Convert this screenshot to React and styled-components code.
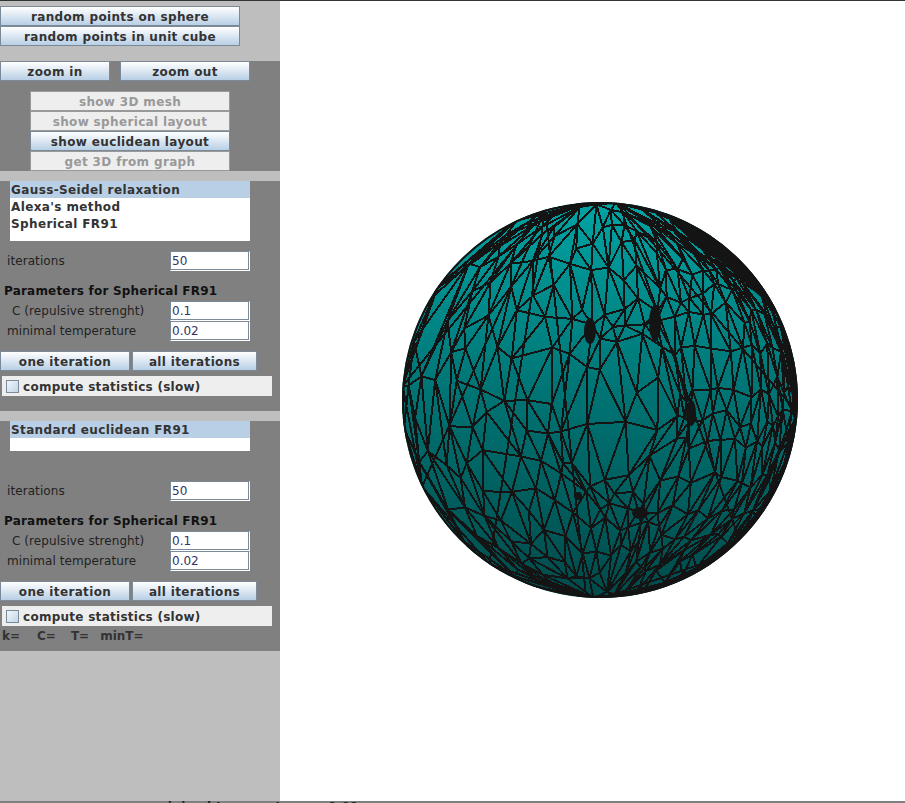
import React, { useMemo } from "react";
import styled, { createGlobalStyle } from "styled-components";

const GlobalStyle = createGlobalStyle`
  html, body {
    margin: 0;
    padding: 0;
    height: 803px;
    overflow: hidden;
    background: #fff;
  }
`;

const FONT = `"DejaVu Sans", sans-serif`;
const BLUE_GRADIENT = "linear-gradient(#ffffff, #b8cfe5)";

const Page = styled.div`
  width: 905px;
  height: 803px;
  display: flex;
  flex-direction: column;
  font-family: ${FONT};
  overflow: hidden;
`;

const TopLine = styled.div`
  height: 1px;
  flex: none;
  background: #333;
`;

const Main = styled.div`
  height: 800px;
  flex: none;
  display: flex;
`;

const Sidebar = styled.div`
  width: 280px;
  flex: none;
  display: flex;
  flex-direction: column;
  background: #bebebe;
`;

const Panel = styled.div`
  height: ${(props) => props.$height}px;
  flex: none;
  box-sizing: border-box;
  padding-top: ${(props) => props.$top || 0}px;
  background: ${(props) => (props.$dark ? "#808080" : "#bebebe")};
  display: flex;
  flex-direction: column;
`;

const Spacer = styled.div`
  height: ${(props) => props.$height}px;
  flex: none;
`;

const Button = styled.button`
  width: ${(props) => props.$width}px;
  height: 20px;
  flex: none;
  box-sizing: border-box;
  margin: 0;
  padding: 2px 0 0;
  border: 1px solid ${(props) => (props.disabled ? "#999" : "#7a8a99")};
  background: ${(props) => (props.disabled ? "#eeeeee" : BLUE_GRADIENT)};
  color: ${(props) => (props.disabled ? "#999" : "#333")};
  font-family: ${FONT};
  font-size: 12px;
  font-weight: bold;
  letter-spacing: 0.35px;
  white-space: nowrap;
`;

const ZoomRow = styled.div`
  display: flex;
  gap: 10px;
  margin-bottom: 10px;
`;

const ViewButtons = styled.div`
  display: flex;
  flex-direction: column;
  padding-left: 30px;
`;

const MethodList = styled.ul`
  width: 240px;
  height: ${(props) => props.$height}px;
  flex: none;
  margin: 0 0 0 10px;
  padding: 0;
  list-style: none;
  background: #fff;
`;

const MethodItem = styled.li`
  height: 17px;
  padding-left: 1px;
  line-height: 18px;
  font-size: 12px;
  font-weight: bold;
  letter-spacing: 0.38px;
  color: #333;
  background: ${(props) => (props.$selected ? "#b8cfe5" : "#fff")};
`;

const FieldRow = styled.div`
  height: 20px;
  flex: none;
  display: flex;
  align-items: center;
  justify-content: space-between;
  width: 250px;
`;

const FieldLabel = styled.span`
  padding-left: ${(props) => props.$indent}px;
  font-size: 12px;
  letter-spacing: 0.08px;
  color: #222;
  white-space: nowrap;
`;

const TextField = styled.input`
  width: 80px;
  height: 20px;
  flex: none;
  box-sizing: border-box;
  padding: 0 0 0 1px;
  border-style: solid;
  border-width: 1px;
  border-color: #7a8a99 #fff #fff #7a8a99;
  box-shadow: inset -1px -1px 0 #7a8a99;
  background: #fff;
  color: #333366;
  font-family: ${FONT};
  font-size: 12px;
  outline: none;
`;

const Heading = styled.div`
  height: 20px;
  flex: none;
  padding-left: 4px;
  line-height: 20px;
  font-size: 12px;
  font-weight: bold;
  letter-spacing: 0.2px;
  color: #111;
`;

const IterationButtons = styled.div`
  display: flex;
  gap: 2px;
  margin-top: 10px;
`;

const CheckRow = styled.label`
  width: 270px;
  height: 20px;
  flex: none;
  margin: 5px 0 0 2px;
  display: flex;
  align-items: center;
  gap: 4px;
  padding-left: 4px;
  box-sizing: border-box;
  background: #eeeeee;
  font-size: 12px;
  font-weight: bold;
  letter-spacing: 0.27px;
  color: #333;
`;

const CheckText = styled.span`
  padding-top: 2px;
`;

const CheckBox = styled.span`
  width: 13px;
  height: 13px;
  flex: none;
  box-sizing: border-box;
  border: 1px solid #7a8a99;
  background: linear-gradient(135deg, #f2f6fa, #c3d6e8);
`;

const StatusRow = styled.div`
  display: flex;
  height: 16px;
  margin-top: 2px;
  padding-left: 2px;
  line-height: 16px;
  font-size: 12px;
  font-weight: bold;
  color: #333;
`;

const StatusItem = styled.span`
  margin-right: ${(props) => props.$after || 0}px;
`;

const Canvas = styled.div`
  flex: 1;
  background: #fff;
`;

const SphereSvg = styled.svg`
  display: block;
`;

const BottomStrip = styled.div`
  height: 2px;
  flex: none;
  padding-left: 155px;
  overflow: hidden;
  background: #808080;
  color: #222;
  font-size: 12px;
  font-weight: bold;
  letter-spacing: 0.35px;
  line-height: 12px;
  white-space: pre;
`;

// sphere centre in canvas coordinates
const CX = 320;
const CY = 399;
const R = 198;

// spots where the relaxation bunches the vertices up
const CLUSTERS = [
  [310, 329, 0.72, 20],
  [375, 320, 0.75, 24],
  [411, 412, 0.72, 24],
  [270, 440, 0.55, 20],
  [298, 492, 0.55, 20],
  [360, 512, 0.75, 26],
  [445, 270, 0.45, 26],
];

// dark knots where the lines run together
const KNOTS = [
  [310, 330, 6, 13],
  [375, 322, 6, 18],
  [411, 412, 5, 13],
  [360, 512, 8, 6],
  [298, 495, 4, 4],
];

function rng(seed) {
  let a = seed;
  return () => {
    a = (a + 0x6d2b79f5) | 0;
    let t = Math.imul(a ^ (a >>> 15), 1 | a);
    t = (t + Math.imul(t ^ (t >>> 7), 61 | t)) ^ t;
    return ((t ^ (t >>> 14)) >>> 0) / 4294967296;
  };
}

function delaunay(pts) {
  const all = pts.concat([[-9000, -9000], [9000, -9000], [0, 11000]]);
  const n = pts.length;
  const circum = (a, b, c) => {
    const [ax, ay] = all[a];
    const [bx, by] = all[b];
    const [cx, cy] = all[c];
    const d = 2 * (ax * (by - cy) + bx * (cy - ay) + cx * (ay - by));
    const aa = ax * ax + ay * ay;
    const bb = bx * bx + by * by;
    const cc = cx * cx + cy * cy;
    const x = (aa * (by - cy) + bb * (cy - ay) + cc * (ay - by)) / d;
    const y = (aa * (cx - bx) + bb * (ax - cx) + cc * (bx - ax)) / d;
    return { a, b, c, x, y, r: (ax - x) ** 2 + (ay - y) ** 2 };
  };
  let tris = [circum(n, n + 1, n + 2)];
  pts.forEach((p, i) => {
    const edges = new Map();
    const keep = [];
    tris.forEach((t) => {
      if ((p[0] - t.x) ** 2 + (p[1] - t.y) ** 2 < t.r) {
        [[t.a, t.b], [t.b, t.c], [t.c, t.a]].forEach(([u, v]) => {
          const k = u < v ? `${u}_${v}` : `${v}_${u}`;
          edges.set(k, edges.has(k) ? null : [u, v]);
        });
      } else keep.push(t);
    });
    edges.forEach((e) => {
      if (e) keep.push(circum(e[0], e[1], i));
    });
    tris = keep;
  });
  const out = new Map();
  tris.forEach((t) => {
    [[t.a, t.b], [t.b, t.c], [t.c, t.a]].forEach(([u, v]) => {
      if (u < n && v < n) out.set(u < v ? `${u}_${v}` : `${v}_${u}`, [u, v]);
    });
  });
  return [...out.values()];
}

function buildMesh() {
  const rand = rng(17);
  const param = [];
  const LON_STEP = 5.5;
  const LAT_STEP = 10;
  let row = 0;
  for (let lat = -86; lat <= 86; lat += LAT_STEP) {
    const shift = row % 2 ? LON_STEP / 2 : 0;
    const keepChance = Math.cos((lat * Math.PI) / 180) * 1.5;
    for (let lon = -90 + shift; lon <= 90; lon += LON_STEP) {
      if (rand() > keepChance && lon < 25) continue;
      const t = lon / 90;
      // more columns on the right of the ball than on the left
      const bent = 90 * (t + 0.42 * (1 - t * t));
      // the left limb stays open, only a few long meridians there
      if (bent < -60 && rand() < 0.55) continue;
      param.push([
        bent + (rand() - 0.5) * LON_STEP * 0.7,
        lat + (rand() - 0.5) * LAT_STEP * 0.7,
      ]);
    }
    if (row % 3 === 0) param.push([-90, lat]);
    if (row % 2 === 0) param.push([90, lat]);
    row += 1;
  }
  const edges = delaunay(param.map(([lon, lat]) => [lon * 2.3, lat]));
  const screen = param.map(([lon, lat]) => {
    const a = (lon * Math.PI) / 180;
    const b = (lat * Math.PI) / 180;
    const x = CX + R * Math.sin(a) * Math.cos(b);
    const y = CY - R * Math.sin(b);
    const r = Math.hypot(x - CX, y - CY);
    if (r > R * 0.97) return [x, y];
    let dx = 0;
    let dy = 0;
    CLUSTERS.forEach(([cx, cy, pull, size]) => {
      const d2 = (x - cx) ** 2 + (y - cy) ** 2;
      const w = pull * Math.exp(-d2 / (2 * (size * 1.6) ** 2));
      dx += (cx - x) * w;
      dy += (cy - y) * w;
    });
    return [x + dx, y + dy];
  });
  return edges
    .map(([u, v]) => `M${screen[u][0].toFixed(1)} ${screen[u][1].toFixed(1)}L${screen[v][0].toFixed(1)} ${screen[v][1].toFixed(1)}`)
    .join("");
}

function Sphere() {
  const mesh = useMemo(buildMesh, []);
  return (
    <SphereSvg width="625" height="800" viewBox="0 0 625 800">
      <defs>
        <linearGradient id="teal" x1="0" y1="0" x2="0" y2="1">
          <stop offset="0" stopColor="#00a3a3" />
          <stop offset="0.5" stopColor="#007272" />
          <stop offset="1" stopColor="#004a4a" />
        </linearGradient>
        <clipPath id="disc">
          <circle cx={CX} cy={CY} r={R} />
        </clipPath>
      </defs>
      <circle cx={CX} cy={CY} r={R} fill="url(#teal)" />
      <g clipPath="url(#disc)">
        <path d={mesh} fill="none" stroke="#141414" strokeWidth="2" shapeRendering="crispEdges" />
        {KNOTS.map(([x, y, rx, ry]) => (
          <ellipse key={`${x}-${y}`} cx={x} cy={y} rx={rx} ry={ry} fill="#141414" />
        ))}
        <path d="M385 212 A198 198 0 0 1 497 310Z" fill="#141414" />
      </g>
      <circle cx={CX} cy={CY} r={R - 1} fill="none" stroke="#141414" strokeWidth="2" />
    </SphereSvg>
  );
}

function Parameters({ title }) {
  return (
    <>
      <FieldRow>
        <FieldLabel $indent={7}>iterations</FieldLabel>
        <TextField defaultValue="50" />
      </FieldRow>
      <Spacer $height={10} />
      <Heading>{title}</Heading>
      <FieldRow>
        <FieldLabel $indent={12}>C (repulsive strenght)</FieldLabel>
        <TextField defaultValue="0.1" />
      </FieldRow>
      <FieldRow>
        <FieldLabel $indent={7}>minimal temperature</FieldLabel>
        <TextField defaultValue="0.02" />
      </FieldRow>
      <IterationButtons>
        <Button $width={130}>one iteration</Button>
        <Button $width={125}>all iterations</Button>
      </IterationButtons>
      <CheckRow>
        <CheckBox />
        <CheckText>compute statistics (slow)</CheckText>
      </CheckRow>
    </>
  );
}

export default function App() {
  return (
    <Page>
      <GlobalStyle />
      <TopLine />
      <Main>
        <Sidebar>
          <Panel $height={60} $top={5}>
            <Button $width={240}>random points on sphere</Button>
            <Button $width={240}>random points in unit cube</Button>
          </Panel>
          <Panel $dark $height={110}>
            <ZoomRow>
              <Button $width={110}>zoom in</Button>
              <Button $width={130}>zoom out</Button>
            </ZoomRow>
            <ViewButtons>
              <Button $width={200} disabled>show 3D mesh</Button>
              <Button $width={200} disabled>show spherical layout</Button>
              <Button $width={200}>show euclidean layout</Button>
              <Button $width={200} disabled>get 3D from graph</Button>
            </ViewButtons>
          </Panel>
          <Spacer $height={10} />
          <Panel $dark $height={230}>
            <MethodList $height={60}>
              <MethodItem $selected>Gauss-Seidel relaxation</MethodItem>
              <MethodItem>Alexa's method</MethodItem>
              <MethodItem>Spherical FR91</MethodItem>
            </MethodList>
            <Spacer $height={10} />
            <Parameters title="Parameters for Spherical FR91" />
          </Panel>
          <Spacer $height={10} />
          <Panel $dark $height={230}>
            <MethodList $height={30}>
              <MethodItem $selected>Standard euclidean FR91</MethodItem>
            </MethodList>
            <Spacer $height={30} />
            <Parameters title="Parameters for Spherical FR91" />
            <StatusRow>
              <StatusItem $after={17}>k=</StatusItem>
              <StatusItem $after={15}>C=</StatusItem>
              <StatusItem $after={11}>T=</StatusItem>
              <StatusItem>minT=</StatusItem>
            </StatusRow>
          </Panel>
        </Sidebar>
        <Canvas>
          <Sphere />
        </Canvas>
      </Main>
      <BottomStrip>minimal temperature     0.01</BottomStrip>
    </Page>
  );
}
